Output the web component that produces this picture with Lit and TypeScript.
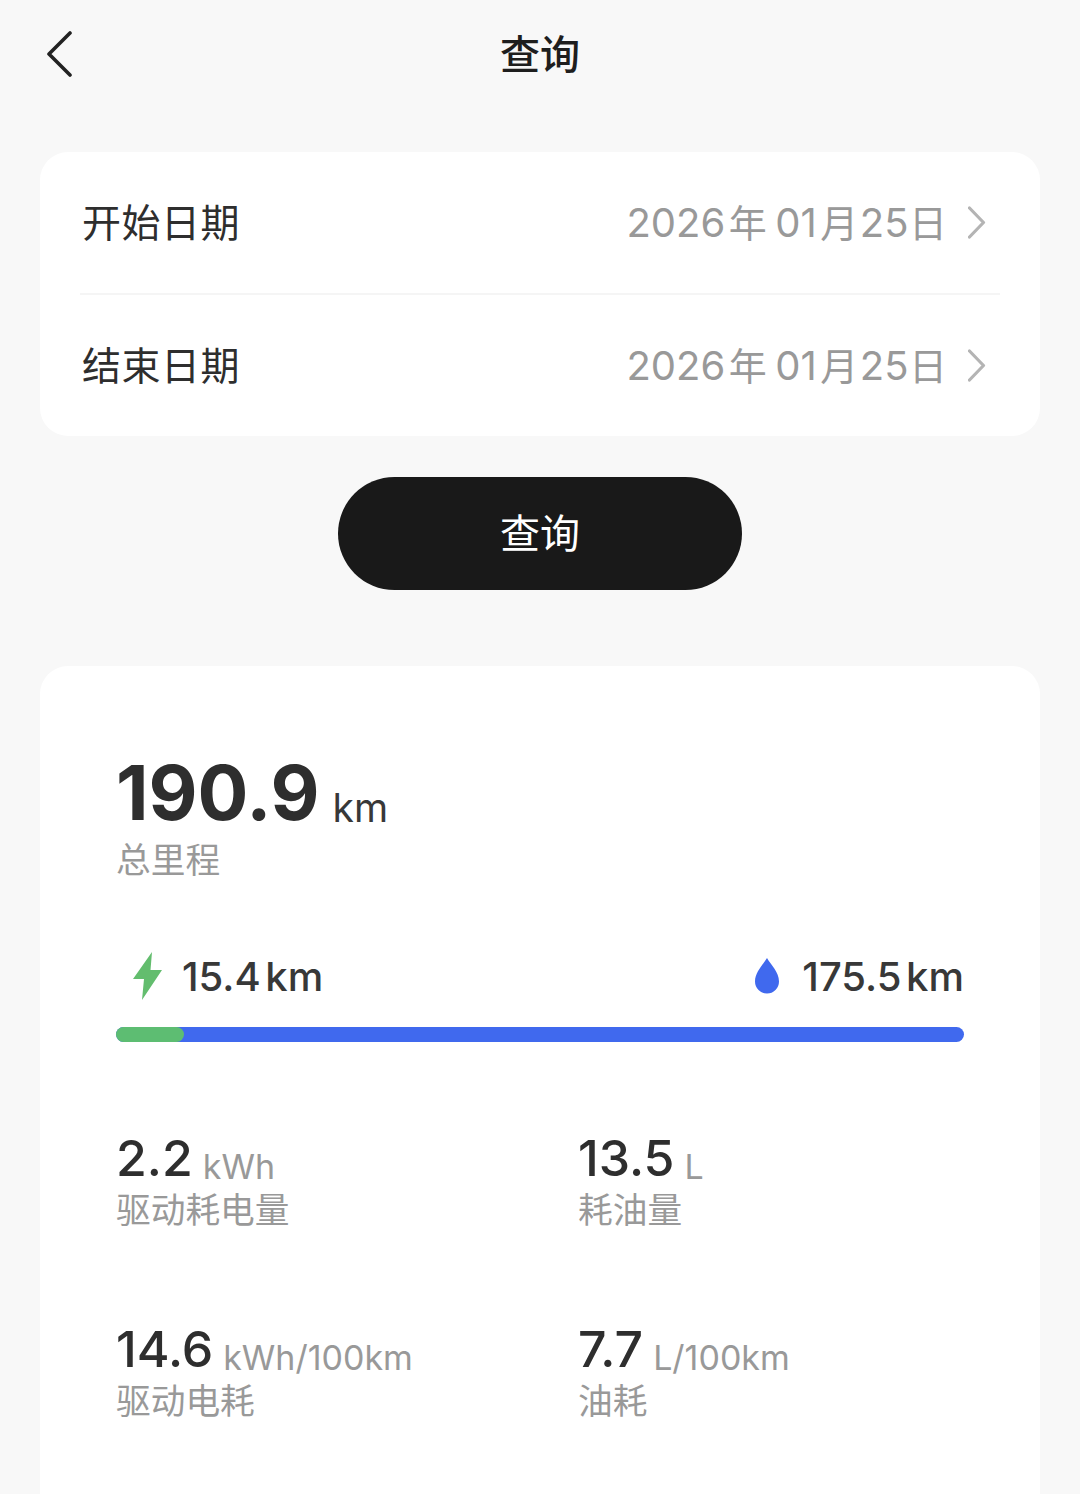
import { LitElement, html, css } from 'lit';

const chevron = html`<svg class="chev" width="20" height="34" viewBox="0 0 20 34" fill="none" stroke="#b4b4b4" stroke-width="3.2" stroke-linecap="round" stroke-linejoin="round"><path d="M1.500 2 15.500 16.500 1.500 31"/></svg>`;

const dateText = html`<span class="date-text">2026<i>年</i>01<i>月</i>25<i>日</i></span>`;

const stats = [
  { value: '2.2', unit: 'kWh', label: '驱动耗电量' },
  { value: '13.5', unit: 'L', label: '耗油量' },
  { value: '14.6', unit: 'kWh/100km', label: '驱动电耗' },
  { value: '7.7', unit: 'L/100km', label: '油耗' },
];

class AppRoot extends LitElement {
  static styles = css`
    :host {
      display: block;
      width: 1080px;
      height: 1494px;
      overflow: hidden;
      background: #f8f8f8;
      font-family: Inter, 'Noto Sans CJK SC', sans-serif;
      color: #2e2e2e;
    }
    header {
      display: flex;
      justify-content: center;
      align-items: center;
      position: relative;
      height: 104px;
      padding-bottom: 6px;
      font-size: 40px;
      font-weight: 500;
      color: #1e1e1e;
    }
    .back {
      position: absolute;
      left: 46px;
      top: 31px;
    }
    .card {
      margin: 0 40px;
      background: #fff;
      border-radius: 28px;
    }
    .dates {
      margin-top: 42px;
      padding: 0 40px;
    }
    .row {
      display: flex;
      align-items: center;
      justify-content: space-between;
      height: 141px;
      font-size: 39px;
      letter-spacing: 0.5px;
    }
    .row + .row {
      border-top: 2px solid #f5f5f5;
    }
    .label {
      margin: 0 0 6px 2px;
    }
    .date {
      display: flex;
      align-items: center;
      gap: 21px;
      color: #999;
      margin-right: 12px;
    }
    .date-text {
      margin-bottom: 4px;
      font-size: 40px;
      letter-spacing: 0;
    }
    .date-text i {
      font-size: 38px;
      font-style: normal;
    }
    .date-text i:nth-of-type(1) {
      margin: 0 8.5px 0 3.5px;
    }
    .date-text i:nth-of-type(2) {
      margin: 0 1.5px 0 3.5px;
    }
    .date-text i:nth-of-type(3) {
      margin-left: 0.5px;
    }
    button {
      display: block;
      width: 404px;
      height: 113px;
      margin: 41px auto 76px;
      padding: 0 0 6px;
      border: 0;
      border-radius: 57px;
      background: #191919;
      color: #fff;
      font: inherit;
      font-size: 40px;
    }
    .summary {
      height: 900px;
      padding: 85px 76px 0;
    }
    .total {
      display: flex;
      align-items: baseline;
      gap: 13px;
      line-height: 84px;
    }
    .total b {
      font-size: 75.5px;
      font-weight: 700;
    }
    .total span {
      font-size: 39px;
      color: #383838;
      transform: translateY(2px);
    }
    .caption {
      font-size: 34.7px;
      line-height: 48px;
      color: #999;
    }
    .total + .caption {
      margin-top: -12px;
    }
    .split {
      display: flex;
      justify-content: space-between;
      align-items: center;
      margin-top: 66px;
      height: 52px;
      font-size: 40px;
      font-weight: 500;
      word-spacing: -6px;
      color: #383838;
    }
    .side {
      display: flex;
      align-items: center;
    }
    .side svg {
      display: block;
    }
    .bar {
      height: 15px;
      margin-top: 25px;
      border-radius: 8px;
      background: #4069ee;
    }
    .bar div {
      height: 100%;
      border-radius: 8px;
      background: #5dbd72;
    }
    .grid {
      display: grid;
      grid-template-columns: 462px 1fr;
      row-gap: 87px;
      margin-top: 86px;
    }
    .value {
      display: flex;
      align-items: baseline;
      gap: 10px;
      line-height: 60px;
      font-size: 50px;
      font-weight: 500;
    }
    .value span {
      font-size: 34px;
      font-weight: 400;
      color: #999;
      transform: translateY(3px);
    }
    .stat .caption {
      margin-top: -6px;
      line-height: 44px;
    }
  `;

  render() {
    return html`
      <header>
        <svg class="back" width="28" height="46" viewBox="0 0 28 46" fill="none" stroke="#222" stroke-width="3.6" stroke-linecap="round" stroke-linejoin="round"><path d="M24 2 3 23 24 44"/></svg>
        查询
      </header>
      <section class="card dates">
        <div class="row"><span class="label">开始日期</span><span class="date">${dateText}${chevron}</span></div>
        <div class="row"><span class="label">结束日期</span><span class="date">${dateText}${chevron}</span></div>
      </section>
      <button>查询</button>
      <section class="card summary">
        <div class="total"><b>190.9</b><span>km</span></div>
        <div class="caption">总里程</div>
        <div class="split">
          <div class="side">
            <svg style="margin:0 19px 0 17px" width="30" height="48" viewBox="0 0 30 48"><path fill="#63bd6e" d="M19 0 0 27h11L9 48 29 18H17.5z"/></svg>
            15.4 km
          </div>
          <div class="side">
            <svg style="margin-right:23px" width="24" height="36" viewBox="0 0 24 36"><path fill="#4069ee" d="M12 0C8 7 0 14 0 23.500a12 12 0 0 0 24 0C24 14 16 7 12 0z"/></svg>
            175.5 km
          </div>
        </div>
        <div class="bar"><div style="width:${(15.4 / 190.9) * 100}%"></div></div>
        <div class="grid">
          ${stats.map(
            (s) => html`<div class="stat">
              <div class="value">${s.value}<span>${s.unit}</span></div>
              <div class="caption">${s.label}</div>
            </div>`
          )}
        </div>
      </section>
    `;
  }
}

customElements.define('app-root', AppRoot);
